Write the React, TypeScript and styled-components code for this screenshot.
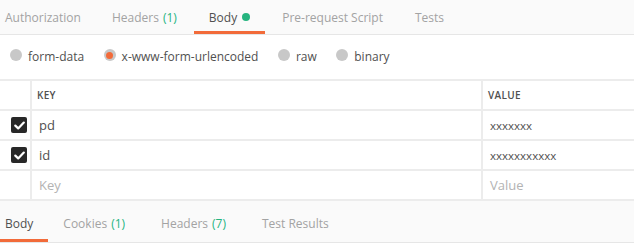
import React from "react";
import styled, { createGlobalStyle } from "styled-components";

const Global = createGlobalStyle`
  html, body { margin: 0; padding: 0; background: #ffffff; }
  body { font-family: "Open Sans", "Noto Sans", sans-serif; }
  * { box-sizing: border-box; }
`;

const Page = styled.div`
  width: 634px;
  height: 251px;
  overflow: hidden;
  background: #ffffff;
  display: flex;
  flex-direction: column;
`;

const TabBar = styled.div<{ $height: number; $padTop?: number }>`
  display: flex;
  align-items: stretch;
  height: ${(p) => p.$height}px;
  padding-top: ${(p) => p.$padTop ?? 0}px;
  background: #fafafa;
  border-bottom: 1px solid #e6e6e6;
  flex-shrink: 0;
`;

const Tab = styled.div<{ $active?: boolean; $first?: boolean; $right?: number; $gap?: number }>`
  position: relative;
  display: flex;
  align-items: center;
  padding-left: ${(p) => (p.$first ? "5px" : "15px")};
  padding-right: ${(p) => (p.$first ? 15 : p.$right ?? 15)}px;
  margin-right: ${(p) => p.$gap ?? 2}px;
  font-size: 12px;
  color: ${(p) => (p.$active ? "#505050" : "#a3a3a3")};
  white-space: nowrap;
  &::after {
    content: "";
    display: ${(p) => (p.$active ? "block" : "none")};
    position: absolute;
    left: 0;
    right: 0;
    bottom: 0;
    height: 3px;
    background: #f26b3a;
  }
`;

const Count = styled.span`
  color: #26b47f;
  margin-left: 4px;
`;

const Dot = styled.span`
  display: inline-block;
  width: 8px;
  height: 8px;
  border-radius: 50%;
  background: #26b47f;
  margin-left: 5px;
`;

const RadioRow = styled.div`
  display: flex;
  align-items: center;
  height: 44px;
  padding-left: 10px;
  padding-bottom: 1px;
  flex-shrink: 0;
`;

const RadioItem = styled.label`
  display: flex;
  align-items: center;
  margin-right: 19.5px;
  font-size: 12px;
  color: #505050;
`;

const RadioCircle = styled.span<{ $checked?: boolean }>`
  width: 12px;
  height: 12px;
  border-radius: 50%;
  background: #c8c8c8;
  margin-right: 6px;
  margin-top: -3px;
  display: flex;
  align-items: center;
  justify-content: center;
  &::after {
    content: "";
    display: ${(p) => (p.$checked ? "block" : "none")};
    width: 7px;
    height: 7px;
    border-radius: 50%;
    background: #f26b3a;
  }
`;

const Table = styled.div`
  display: grid;
  grid-template-columns: 30px 451px 1fr;
  border-top: 2px solid #ececec;
  flex-shrink: 0;
`;

const Cell = styled.div<{ $head?: boolean; $first?: boolean; $placeholder?: boolean; $small?: boolean }>`
  height: 30px;
  border-bottom: 2px solid #ececec;
  border-left: ${(p) => (p.$first ? "none" : "2px solid #ececec")};
  display: flex;
  align-items: center;
  justify-content: ${(p) => (p.$first ? "flex-end" : "flex-start")};
  padding: ${(p) => (p.$first ? "0 3px 0 0" : p.$head ? "0 0 0 5px" : "0 0 0 7px")};
  font-size: ${(p) => (p.$head ? "10px" : p.$small ? "11.5px" : "13px")};
  font-weight: ${(p) => (p.$head ? 600 : 400)};
  letter-spacing: ${(p) => (p.$head ? "0.3px" : "0")};
  color: ${(p) => (p.$placeholder ? "#b3b3b3" : "#505050")};
`;

const Check = styled.span`
  width: 16px;
  height: 16px;
  border-radius: 2px;
  background: #282828;
  display: flex;
  align-items: center;
  justify-content: center;
`;

const Filler = styled.div`
  flex: 1;
`;

const Checkbox = () => (
  <Check>
    <svg width="11" height="9" viewBox="0 0 11 9">
      <path d="M1.3 4.6 L4.2 7.4 L9.8 1.6" fill="none" stroke="#fff" strokeWidth="2.2" strokeLinecap="round" strokeLinejoin="round" />
    </svg>
  </Check>
);

const rows = [
  { key: "pd", value: "xxxxxxx", checked: true },
  { key: "id", value: "xxxxxxxxxxx", checked: true },
];

export default function App() {
  return (
    <Page>
      <Global />
      <TabBar $height={35}>
        <Tab $first $gap={1}>Authorization</Tab>
        <Tab>
          Headers<Count>(1)</Count>
        </Tab>
        <Tab $active>
          Body<Dot />
        </Tab>
        <Tab>Pre-request Script</Tab>
        <Tab>Tests</Tab>
      </TabBar>
      <RadioRow>
        <RadioItem>
          <RadioCircle />
          form-data
        </RadioItem>
        <RadioItem>
          <RadioCircle $checked />
          x-www-form-urlencoded
        </RadioItem>
        <RadioItem>
          <RadioCircle />
          raw
        </RadioItem>
        <RadioItem>
          <RadioCircle />
          binary
        </RadioItem>
      </RadioRow>
      <Table>
        <Cell $head $first />
        <Cell $head>KEY</Cell>
        <Cell $head>VALUE</Cell>
        {rows.map((r) => (
          <React.Fragment key={r.key}>
            <Cell $first>{r.checked && <Checkbox />}</Cell>
            <Cell>{r.key}</Cell>
            <Cell $small>{r.value}</Cell>
          </React.Fragment>
        ))}
        <Cell $first />
        <Cell $placeholder>Key</Cell>
        <Cell $placeholder>Value</Cell>
      </Table>
      <TabBar $height={42} $padTop={3}>
        <Tab $first $active $gap={0}>Body</Tab>
        <Tab $right={17} $gap={4}>
          Cookies<Count>(1)</Count>
        </Tab>
        <Tab $right={17} $gap={4}>
          Headers<Count>(7)</Count>
        </Tab>
        <Tab $right={17} $gap={4}>Test Results</Tab>
      </TabBar>
      <Filler />
    </Page>
  );
}
